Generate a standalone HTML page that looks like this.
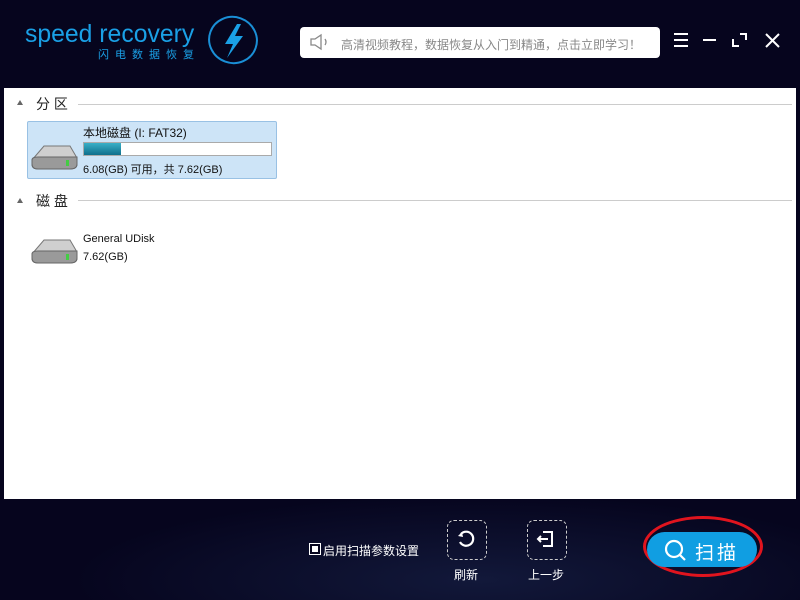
<!DOCTYPE html>
<html><head><meta charset="utf-8"><style>
body{margin:0;width:800px;height:600px;background:#06051e;position:relative;overflow:hidden;font-family:"Liberation Sans","Noto Sans CJK SC",sans-serif}
.abs{position:absolute}
.panel{left:4px;top:88px;width:792px;height:411px;background:#fff}
.sec{font-size:14px;color:#222}
.line{height:1px;background:#ccc}
.tri{width:0;height:0;border-left:3px solid transparent;border-right:3px solid transparent;border-bottom:5px solid #666}
.t12{font-size:12px;color:#111}
</style></head><body>
<div class="abs" style="left:0;top:480px;width:800px;height:120px;background:radial-gradient(ellipse at 480px 100px,rgba(40,60,110,.35),transparent 60%)"></div>
<div class="abs" style="left:25px;top:20px;font-size:25px;color:#1aa0e6;white-space:nowrap;transform:scaleX(0.99);transform-origin:left">speed recovery</div>
<div class="abs" style="left:98px;top:46px;font-size:11px;color:#1aa0e6;letter-spacing:6px">闪电数据恢复</div>
<svg class="abs" style="left:205px;top:14px" width="56" height="52"><ellipse cx="28" cy="26" rx="24" ry="23" fill="none" stroke="#1a8fd6" stroke-width="2" transform="rotate(20 28 26)"/><path d="M32 10 L20 30 L28 30 L22 44 L38 22 L30 22 L36 10Z" fill="#1aa0e6"/></svg>
<div class="abs" style="left:300px;top:27px;width:360px;height:31px;background:#fff;border-radius:4px"></div>
<svg class="abs" style="left:309px;top:33px" width="24" height="18"><path d="M2 6h4l6-4v14l-6-4H2z" fill="none" stroke="#888" stroke-width="1.3"/><path d="M16 6q2 3 0 6" fill="none" stroke="#888" stroke-width="1.3"/></svg>
<div class="abs" style="left:341px;top:36px;font-size:12px;color:#888">高清视频教程，数据恢复从入门到精通，点击立即学习！</div>
<svg class="abs" style="left:672px;top:30px" width="115" height="20"><g stroke="#fff" stroke-width="2" fill="none"><path d="M2 4h14M2 10h14M2 16h14"/><path d="M31 10h13"/><path d="M61 9v7h6M68 4h6v6"/><path d="M94 4l13 13M107 4l-13 13"/></g></svg>
<div class="abs panel"></div>
<div class="abs tri" style="left:17px;top:100px"></div>
<div class="abs sec" style="left:36px;top:94px">分 区</div>
<div class="abs line" style="left:78px;top:104px;width:714px"></div>
<div class="abs" style="left:27px;top:121px;width:248px;height:56px;background:#cde4f7;border:1px solid #99c1e4;border-radius:2px"></div>
<div class="abs t12" style="left:83px;top:124px">本地磁盘 (I: FAT32)</div>
<div class="abs" style="left:83px;top:142px;width:187px;height:12px;background:#fff;border:1px solid #aaa"></div>
<div class="abs" style="left:84px;top:143px;width:37px;height:12px;background:linear-gradient(#3ab0c8,#0e6f8c)"></div>
<div class="abs" style="font-size:11px;left:83px;top:161px;color:#111">6.08(GB) 可用，共 7.62(GB)</div>
<div class="abs tri" style="left:17px;top:198px"></div>
<div class="abs sec" style="left:36px;top:191px">磁 盘</div>
<div class="abs line" style="left:78px;top:200px;width:714px"></div>
<div class="abs" style="font-size:11px;left:83px;top:233px;color:#111">General UDisk</div>
<div class="abs" style="font-size:11px;left:83px;top:251px;color:#111">7.62(GB)</div>
<svg class="abs" style="left:30px;top:142px" width="48" height="30"><path d="M2 18 L14 4 H40 L47 16 V22 Q47 27 40 27 H8 Q2 27 2 22Z" fill="#cfcfcf" stroke="#777"/><path d="M2 18 Q2 15 8 15 H47 V22 Q47 27 40 27 H8 Q2 27 2 22Z" fill="#9a9a9a" stroke="#666"/><rect x="36" y="18" width="3" height="6" fill="#4c4"/></svg>
<svg class="abs" style="left:30px;top:236px" width="48" height="30"><path d="M2 18 L14 4 H40 L47 16 V22 Q47 27 40 27 H8 Q2 27 2 22Z" fill="#cfcfcf" stroke="#777"/><path d="M2 18 Q2 15 8 15 H47 V22 Q47 27 40 27 H8 Q2 27 2 22Z" fill="#9a9a9a" stroke="#666"/><rect x="36" y="18" width="3" height="6" fill="#4c4"/></svg>
<div class="abs" style="left:309px;top:543px;width:10px;height:10px;border:1px solid #fff;background:#06051e"><div style="margin:2px;width:6px;height:6px;background:#fff"></div></div>
<div class="abs" style="left:323px;top:542px;font-size:12px;color:#fff">启用扫描参数设置</div>
<div class="abs" style="left:447px;top:520px;width:38px;height:38px;border:1px dashed #ccc;border-radius:7px"></div>
<svg class="abs" style="left:455px;top:528px" width="22" height="22"><path d="M6 6 A7 7 0 1 1 5 14" fill="none" stroke="#fff" stroke-width="2.2"/><path d="M3 8l4-4 1 5z" fill="#fff"/></svg>
<div class="abs" style="left:454px;top:566px;font-size:12px;color:#fff">刷新</div>
<div class="abs" style="left:527px;top:520px;width:38px;height:38px;border:1px dashed #ccc;border-radius:7px"></div>
<svg class="abs" style="left:535px;top:528px" width="22" height="22"><path d="M8 4h9v14H8M3 11h10M6 8l-3 3 3 3" fill="none" stroke="#fff" stroke-width="2"/></svg>
<div class="abs" style="left:528px;top:566px;font-size:12px;color:#fff">上一步</div>
<div class="abs" style="left:643px;top:516px;width:120px;height:61px;border:3px solid #e0141e;border-radius:50%;box-sizing:border-box"></div>
<div class="abs" style="left:647px;top:532px;width:110px;height:35px;background:#109ee2;border-radius:18px"></div>
<svg class="abs" style="left:664px;top:539px" width="24" height="24"><circle cx="10" cy="10" r="8" fill="none" stroke="#fff" stroke-width="2.2"/><path d="M16 16l5 5" stroke="#fff" stroke-width="2.2"/></svg>
<div class="abs" style="left:695px;top:538px;font-size:19px;color:#fff;letter-spacing:3px">扫描</div>
</body></html>
